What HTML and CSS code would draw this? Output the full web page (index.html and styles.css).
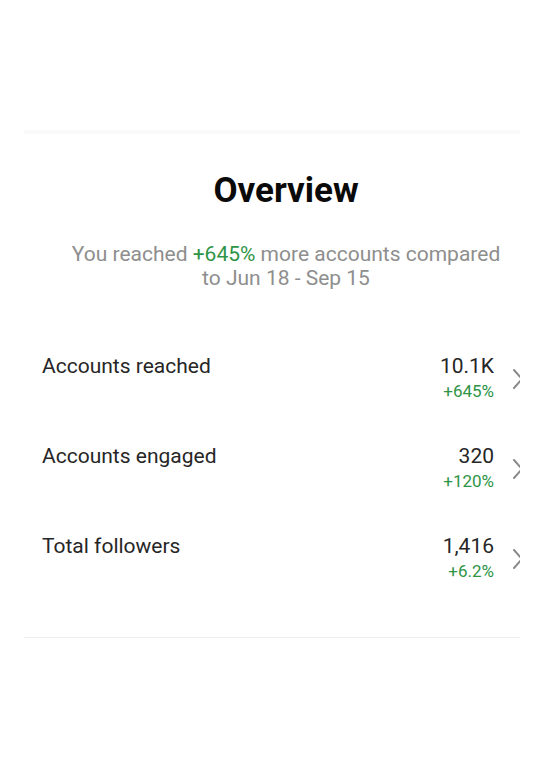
FILE: index.html
```html
<!DOCTYPE html>
<html>
<head>
<meta charset="utf-8">
<link rel="stylesheet" href="styles.css">
</head>
<body>
<div class="card">
  <div class="inner">
    <h1 class="title">Overview</h1>
    <p class="summary"><span class="line">You reached <span class="up">+645%</span> more accounts compared</span> <span class="line">to Jun 18 - Sep 15</span></p>
    <ul class="stats">
      <li class="row">
        <span class="label">Accounts reached</span>
        <span class="vals"><span class="num">10.1K</span><span class="delta">+645%</span></span>
        <svg class="chev" width="12" height="22" viewBox="0 0 12 22"><path d="M2 2 L10 11 L2 20" fill="none" stroke="#8a8a8a" stroke-width="2" stroke-linecap="round" stroke-linejoin="round"/></svg>
      </li>
      <li class="row">
        <span class="label">Accounts engaged</span>
        <span class="vals"><span class="num">320</span><span class="delta">+120%</span></span>
        <svg class="chev" width="12" height="22" viewBox="0 0 12 22"><path d="M2 2 L10 11 L2 20" fill="none" stroke="#8a8a8a" stroke-width="2" stroke-linecap="round" stroke-linejoin="round"/></svg>
      </li>
      <li class="row">
        <span class="label">Total followers</span>
        <span class="vals"><span class="num">1,416</span><span class="delta">+6.2%</span></span>
        <svg class="chev" width="12" height="22" viewBox="0 0 12 22"><path d="M2 2 L10 11 L2 20" fill="none" stroke="#8a8a8a" stroke-width="2" stroke-linecap="round" stroke-linejoin="round"/></svg>
      </li>
    </ul>
  </div>
</div>
</body>
</html>
```

FILE: styles.css
```css
html, body {
  margin: 0;
  padding: 0;
  background: #ffffff;
}
body {
  font-family: Roboto, "Liberation Sans", sans-serif;
  padding-top: 130px;
}
.card {
  margin-left: 24px;
  width: 496px;
  height: 508px;
  overflow: hidden;
  border-top: 4px solid #fafafa;
  border-bottom: 1px solid #ededed;
  box-sizing: border-box;
}
.inner {
  width: 524px;
}
.title {
  margin: 36px 0 0;
  text-align: center;
  font-size: 35px;
  font-weight: 700;
  color: #0a0a0a;
  line-height: 42px;
}
.summary {
  margin: 30px auto 0;
  max-width: 440px;
  text-align: center;
  font-size: 21px;
  line-height: 24px;
  color: #8e8e8e;
}
.line {
  display: block;
}
.up {
  color: #2e9446;
}
.stats {
  list-style: none;
  margin: 64px 0 0;
  padding: 0;
}
.row {
  display: flex;
  align-items: flex-start;
  height: 90px;
  padding-left: 18px;
}
.label {
  flex: 1;
  font-size: 21px;
  line-height: 24px;
  color: #262626;
}
.vals {
  display: flex;
  flex-direction: column;
  align-items: flex-end;
}
.num {
  font-size: 21px;
  line-height: 24px;
  color: #262626;
}
.delta {
  font-size: 17px;
  line-height: 20px;
  color: #2e9446;
  margin-top: 3px;
}
.chev {
  margin: 14px 24px 0 18px;
}
```
